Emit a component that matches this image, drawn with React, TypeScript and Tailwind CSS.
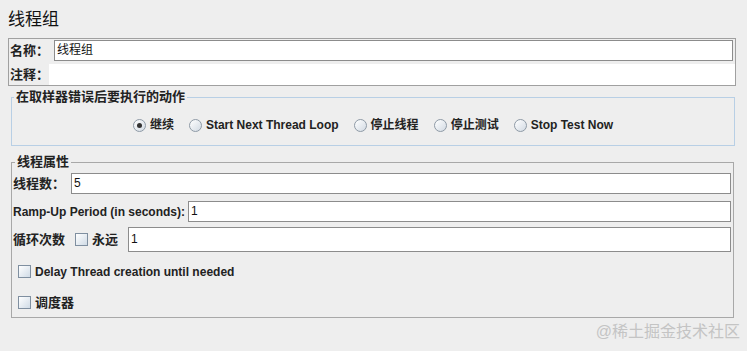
import React from 'react';

const font = { fontFamily: '"Liberation Sans", "Noto Sans CJK SC", sans-serif' };

const Radio = ({ checked, label }: { checked?: boolean; label: string }) => (
    <label className="flex items-center gap-[4px]">
        <span className="w-[13px] h-[13px] rounded-full border border-[#8e9aa6] bg-gradient-to-br from-white to-[#d2dae3] flex items-center justify-center">
            {checked && <span className="w-[5px] h-[5px] rounded-full bg-[#333]"></span>}
        </span>
        <span className="text-[12px] font-bold text-[#222] leading-[14px]">{label}</span>
    </label>
);

const Check = () => (
    <span className="w-[13px] h-[13px] border border-[#7f8fa0] bg-gradient-to-br from-white to-[#d0dbe6] inline-block"></span>
);

const Input = ({ value, className = '' }: { value?: string; className?: string }) => (
    <div className={`flex-1 bg-white border border-[#8c8c8c] text-[12px] leading-[19px] px-[2px] text-[#111] ${className}`}>
        {value}
    </div>
);

export default function App() {
    return (
        <div className="w-[747px] h-[351px] bg-[#eeeeee] relative overflow-hidden" style={font}>
            <div className="h-[38px] pl-[8px] pt-[9px] text-[17px] leading-[22px] text-[#111]">线程组</div>

            {/* name / comment */}
            <div className="ml-[8px] w-[728px] h-[48px] border border-[#a0a0a0] flex flex-col">
                <div className="flex items-center mt-[1px] h-[21px] pr-[2px]">
                    <span className="w-[45px] pl-[1px] text-[13px] font-bold text-[#222]">名称：</span>
                    <Input value="线程组" className="h-[21px]" />
                </div>
                <div className="flex items-center mt-[3px] h-[21px]">
                    <span className="w-[40px] pl-[1px] text-[13px] font-bold text-[#222]">注释：</span>
                    <div className="flex-1 h-[21px] bg-white"></div>
                </div>
            </div>

            {/* action on sampler error */}
            <fieldset className="ml-[11px] mt-[3px] w-[724px] h-[57px] border border-[#b8cfe5]">
                <legend className="ml-[2px] px-[2px] text-[13px] leading-[16px] font-bold text-[#222]">在取样器错误后要执行的动作</legend>
                <div className="h-[40px] flex items-center justify-center gap-[15px]">
                    <Radio checked label="继续" />
                    <Radio label="Start Next Thread Loop" />
                    <Radio label="停止线程" />
                    <Radio label="停止测试" />
                    <Radio label="Stop Test Now" />
                </div>
            </fieldset>

            {/* thread properties */}
            <fieldset className="ml-[11px] mt-[8px] w-[723px] h-[164px] border border-[#a8a8a8] pl-[1px] pr-[2px]">
                <legend className="ml-[2px] px-[2px] text-[13px] leading-[16px] font-bold text-[#222]">线程属性</legend>
                <div className="flex items-center mt-[3px] h-[21px]">
                    <span className="w-[58px] text-[13px] font-bold text-[#222]">线程数：</span>
                    <Input value="5" className="h-[21px]" />
                </div>
                <div className="flex items-center mt-[7px] h-[21px]">
                    <span className="w-[175px] text-[12px] font-bold text-[#222]">Ramp-Up Period (in seconds):</span>
                    <Input value="1" className="h-[21px]" />
                </div>
                <div className="flex items-center mt-[5px] h-[25px]">
                    <span className="w-[62px] text-[13px] font-bold text-[#222]">循环次数</span>
                    <Check />
                    <span className="ml-[4px] w-[36px] text-[13px] font-bold text-[#222]">永远</span>
                    <Input value="1" className="h-[25px] leading-[23px]" />
                </div>
                <div className="flex items-center mt-[13px] h-[13px] pl-[5px] gap-[4px]">
                    <Check />
                    <span className="text-[12px] font-bold text-[#222]">Delay Thread creation until needed</span>
                </div>
                <div className="flex items-center mt-[18px] h-[13px] pl-[5px] gap-[4px]">
                    <Check />
                    <span className="text-[13px] font-bold text-[#222]">调度器</span>
                </div>
            </fieldset>

            <div className="absolute right-[7px] bottom-[9px] text-[16px] leading-[20px] text-[#c4c4c4]">@稀土掘金技术社区</div>
        </div>
    );
}
